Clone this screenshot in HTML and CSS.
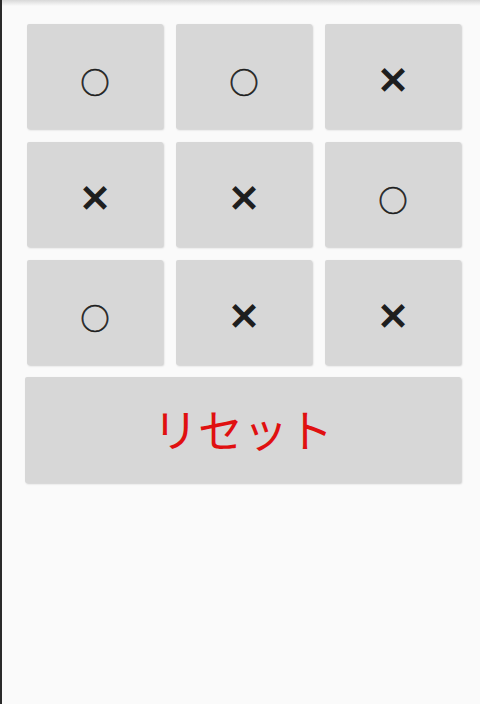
FILE: index.html
```html
<!DOCTYPE html>
<html lang="ja">
<head>
    <meta charset="UTF-8">
    <meta name="viewport" content="width=device-width, initial-scale=1.0">
    <title>マルバツ</title>
    <link rel="stylesheet" href="styles.css">
</head>
<body>

    <div class="topbar"></div>

    <div class="board">
        <button class="cell maru">○</button>
        <button class="cell maru">○</button>
        <button class="cell batsu">×</button>

        <button class="cell batsu">×</button>
        <button class="cell batsu">×</button>
        <button class="cell maru">○</button>

        <button class="cell maru">○</button>
        <button class="cell batsu">×</button>
        <button class="cell batsu">×</button>

        <button class="reset">リセット</button>
    </div>

</body>
</html>
```

FILE: styles.css
```css
html, body {
    height: 100%;
}

body {
    margin: 0;
    background-color: #fafafa;
    border-left: 2px solid #2a2a2a;
    box-sizing: border-box;
    font-family: "Noto Sans CJK JP", "Noto Sans", sans-serif;
}

.topbar {
    height: 6px;
    background: linear-gradient(#d8d8d8, #fafafa);
}

.board {
    display: grid;
    grid-template-columns: repeat(3, 136px);
    grid-auto-rows: 105px;
    column-gap: 13px;
    row-gap: 13px;
    padding: 18px 0 0 25px;
}

.cell, .reset {
    border: none;
    border-radius: 2px;
    background-color: #d7d7d7;
    box-shadow: 1px 1px 2px rgba(0, 0, 0, 0.18);
    padding: 0;
    color: #1e1e1e;
    font-family: "Noto Sans CJK JP", "DejaVu Sans", sans-serif;
}

.maru {
    font-size: 29px;
    padding-top: 8px;
    -webkit-text-stroke: 0.6px #1e1e1e;
}

.batsu {
    font-size: 33px;
    font-weight: bold;
    padding-top: 3px;
    -webkit-text-stroke: 1.5px #1e1e1e;
}

.reset {
    grid-column: 1 / 4;
    margin-left: -2px;
    margin-top: -1px;
    padding-bottom: 4px;
    color: #e01010;
    font-size: 45px;
}
```
